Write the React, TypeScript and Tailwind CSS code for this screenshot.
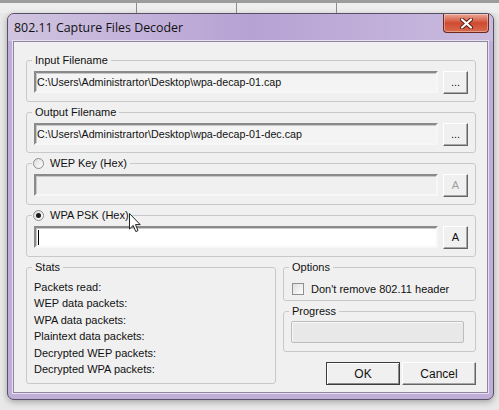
import type { ReactNode } from "react";

const sunken =
  "border-2 border-t-[#8a8a8a] border-l-[#8a8a8a] border-b-[#f7f7f7] border-r-[#f7f7f7] shadow-[inset_1px_1px_0_#c8c8c8]";
const raised =
  "border border-t-white border-l-white border-b-[#646464] border-r-[#646464] shadow-[inset_-1px_-1px_0_#a8a8a8] bg-[#f0f0f0]";

function GroupBox({
  label,
  className = "",
  children,
}: {
  label: ReactNode;
  className?: string;
  children?: ReactNode;
}) {
  return (
    <div className={`rounded-[3px] border border-[#c6cacd] ${className}`}>
      <div className="-mt-[7px] ml-[5px] flex h-[13px] w-fit items-center bg-[#f0f0f0] px-[3px] text-[11px] leading-[13px] text-[#111]">
        {label}
      </div>
      {children}
    </div>
  );
}

function Radio({ checked = false }: { checked?: boolean }) {
  return (
    <span className="mr-[6px] -ml-[2px] flex size-[11px] items-center justify-center rounded-full border border-[#8d8d8d] bg-gradient-to-br from-[#dcdcdc] to-white">
      {checked && <span className="size-[5px] rounded-full bg-[#1a1a1a]" />}
    </span>
  );
}

function FileRow({
  value,
  btn,
  disabled = false,
  caret = false,
}: {
  value?: string;
  btn: string;
  disabled?: boolean;
  caret?: boolean;
}) {
  return (
    <div className="mt-[4px] flex items-start gap-[5px] pl-[7px] pr-[7px]">
      <div
        className={`flex h-[22px] flex-1 items-center pl-[1px] text-[10.7px] ${sunken} ${
          disabled ? "bg-[#f0f0f0]" : value ? "bg-[#f4f4f4]" : "bg-white"
        }`}
      >
        {caret && <span className="ml-[1px] h-[15px] w-px bg-black" />}
        {value}
      </div>
      <div
        className={`flex h-[23px] w-[25px] items-center justify-center text-[11px] ${raised} ${
          disabled ? "text-[#a0a0a0]" : "text-[#111]"
        }`}
      >
        {btn}
      </div>
    </div>
  );
}

export default function App() {
  const stats = [
    "Packets read:",
    "WEP data packets:",
    "WPA data packets:",
    "Plaintext data packets:",
    "Decrypted WEP packets:",
    "Decrypted WPA packets:",
  ];

  return (
    <div className="relative h-[410px] w-[499px] overflow-hidden bg-[#e8e8e8] font-['Liberation_Sans',Arial,sans-serif]">
      {/* list header behind the dialog */}
      <div className="flex h-[13px] border-t-[3px] border-[#9c9c9c] bg-[#eeeeee]">
        <div className="w-[137px] border-r border-[#8c8c8c]" />
        <div className="w-[100px] border-r border-[#8c8c8c]" />
        <div className="w-[100px] border-r border-[#8c8c8c]" />
        <div className="flex-1" />
      </div>

      {/* dialog window */}
      <div className="ml-[7px] flex h-[387px] w-[487px] flex-col rounded-[7px] border border-[#575066] bg-[#bfaed8] shadow-[0_2px_6px_rgba(0,0,0,0.3)]">
        <div className="flex h-[27px] shrink-0 items-start rounded-t-[6px] bg-gradient-to-r from-[#d0c4e0] via-[#b7a2d4] to-[#cabbde]">
          <span className="mt-[6px] ml-[6px] font-['Open_Sans',sans-serif] text-[12.4px] leading-[16px] text-[#111]">
            802.11 Capture Files Decoder
          </span>
          <div className="mr-[4px] ml-auto flex h-[19px] w-[46px] items-center justify-center rounded-b-[4px] border border-t-0 border-[#6b2a20] bg-gradient-to-b from-[#e9a596] via-[#cf4a31] to-[#d86a4c] shadow-[inset_0_0_0_1px_rgba(255,255,255,0.35)]">
            <svg width="13" height="11" viewBox="0 0 13 11">
              <path
                d="M2 1.5 L11 9.5 M11 1.5 L2 9.5"
                stroke="#5a1a12"
                strokeWidth="4"
                strokeLinecap="round"
              />
              <path
                d="M2 1.5 L11 9.5 M11 1.5 L2 9.5"
                stroke="#ffffff"
                strokeWidth="2.2"
                strokeLinecap="round"
              />
            </svg>
          </div>
        </div>

        <div className="mx-[5px] flex h-[352px] flex-col border border-[#8f85a3] bg-[#f0f0f0] pt-[18px] pr-[11px] pl-[12px] text-[11px] text-[#111] shadow-[0_0_0_1px_#e6e0ee]">
          <GroupBox label="Input Filename" className="h-[42px]">
            <FileRow value="C:\Users\Administrartor\Desktop\wpa-decap-01.cap" btn="..." />
          </GroupBox>
          <GroupBox label="Output Filename" className="mt-[10px] h-[41px]">
            <FileRow value="C:\Users\Administrartor\Desktop\wpa-decap-01-dec.cap" btn="..." />
          </GroupBox>
          <GroupBox
            label={
              <>
                <Radio />
                WEP Key (Hex)
              </>
            }
            className="mt-[10px] h-[42px]"
          >
            <FileRow btn="A" disabled />
          </GroupBox>
          <GroupBox
            label={
              <>
                <Radio checked />
                WPA PSK (Hex)
              </>
            }
            className="mt-[10px] h-[42px]"
          >
            <FileRow btn="A" caret />
          </GroupBox>

          <div className="mt-[10px] flex gap-[7px]">
            <GroupBox label="Stats" className="h-[117px] w-[250px]">
              <div className="mt-[5px] pl-[7px] leading-[16.4px]">
                {stats.map((s) => (
                  <div key={s}>{s}</div>
                ))}
              </div>
            </GroupBox>

            <div className="flex flex-1 flex-col">
              <GroupBox label="Options" className="h-[34px]">
                <div className="mt-[7px] flex items-center pl-[8px]">
                  <span className="mr-[7px] size-[12px] border border-[#8e8f8f] bg-gradient-to-br from-[#dedede] to-white" />
                  Don&apos;t remove 802.11 header
                </div>
              </GroupBox>
              <GroupBox label="Progress" className="mt-[10px] h-[41px]">
                <div className="mt-[3px] ml-[7px] h-[22px] w-[173px] rounded-[2px] border border-[#bcbcbc] bg-[#e8e8e8] shadow-[inset_1px_1px_0_#f8f8f8]" />
              </GroupBox>
              <div className="mt-[10px] flex justify-end gap-[2px]">
                <div className="flex h-[23px] w-[74px] items-center justify-center border border-[#3c3c3c] bg-[#f0f0f0] text-[12px] shadow-[inset_1px_1px_0_#fff,inset_-1px_-1px_0_#8a8a8a]">
                  OK
                </div>
                <div className={`flex h-[23px] w-[74px] items-center justify-center text-[12px] ${raised}`}>
                  Cancel
                </div>
              </div>
            </div>
          </div>
        </div>
      </div>

      {/* mouse pointer */}
      <svg
        className="absolute top-[213px] left-[129px]"
        width="12"
        height="20"
        viewBox="0 0 12 20"
      >
        <path
          d="M0.5 0.5 L0.5 16 L4.2 12.4 L6.8 18.6 L9 17.6 L6.5 11.6 L11.2 11.6 Z"
          fill="#fff"
          stroke="#222"
          strokeWidth="1"
        />
      </svg>
    </div>
  );
}
